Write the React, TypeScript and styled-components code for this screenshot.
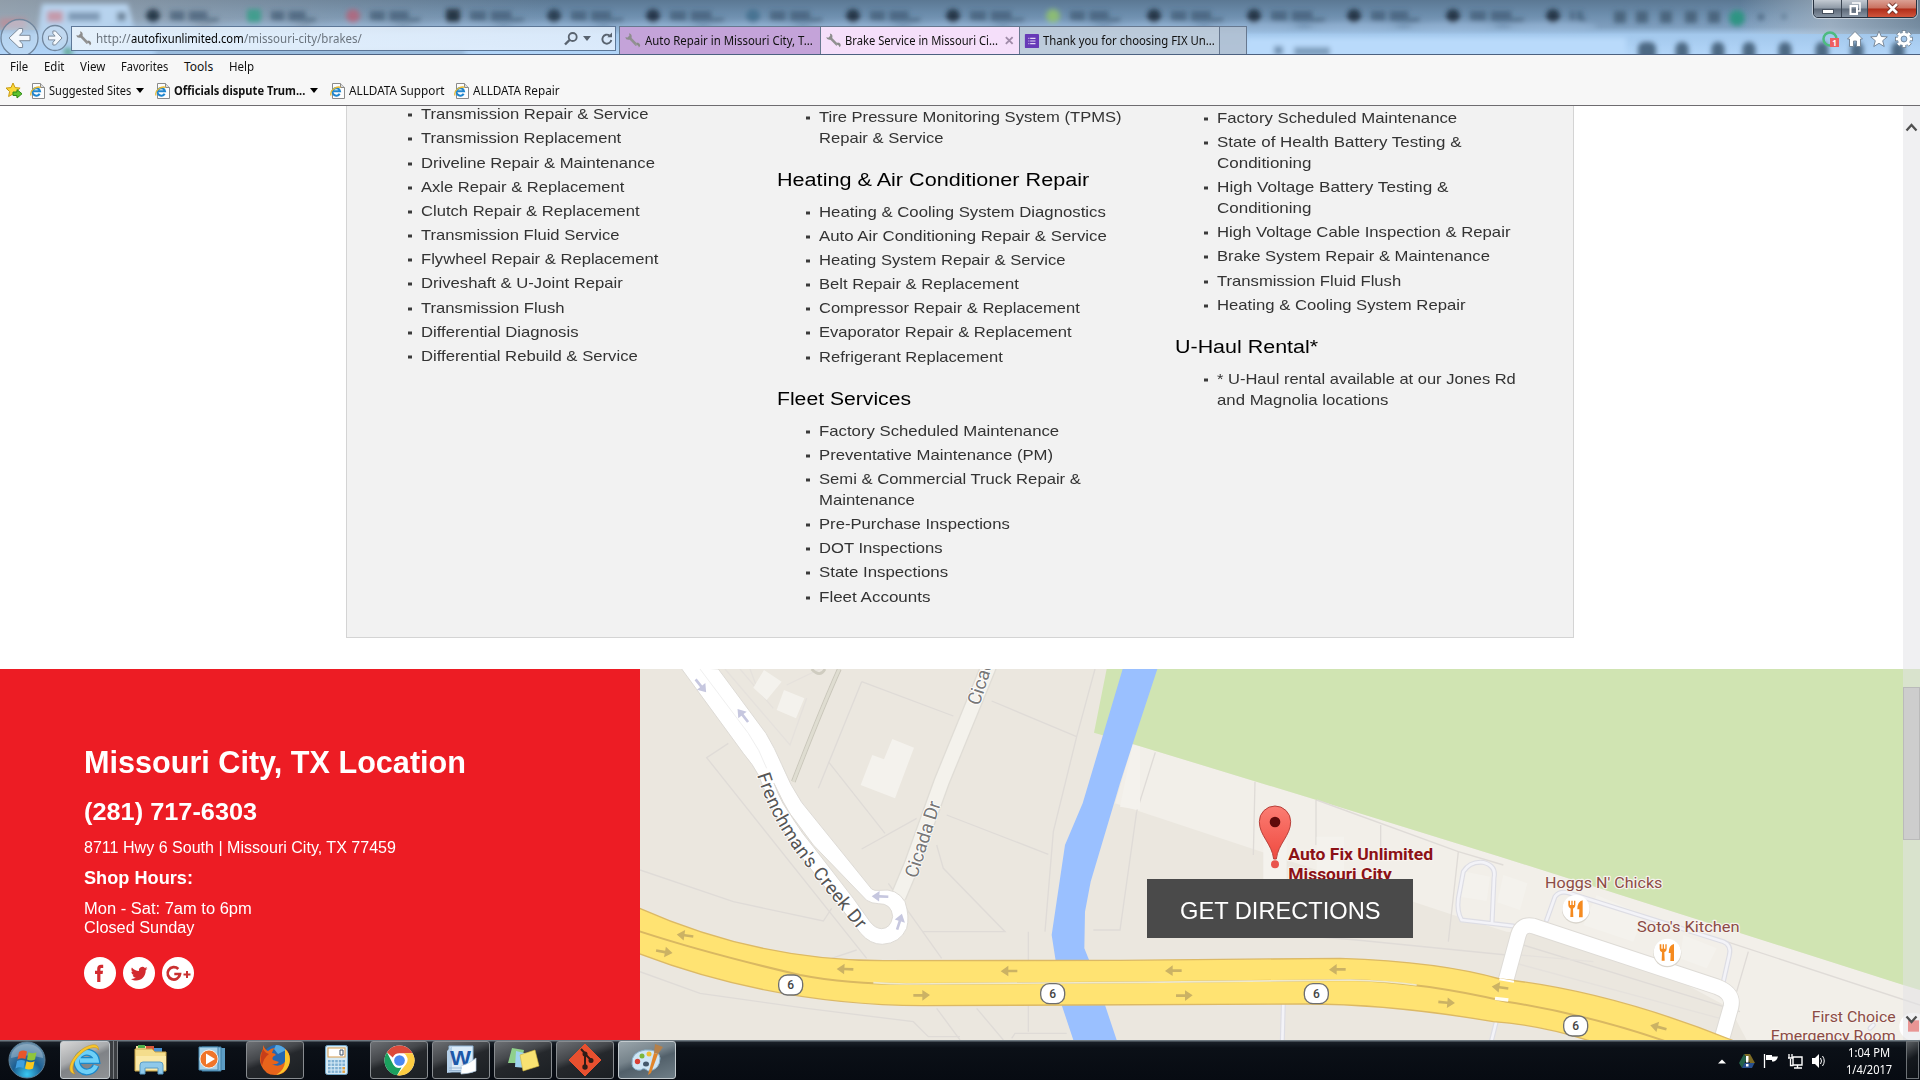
import React, { useLayoutEffect, useRef, useState } from "react";
import styled, { createGlobalStyle } from "styled-components";

const Global = createGlobalStyle`
  html, body { margin: 0; padding: 0; overflow: hidden; background: #fff; }
  * { box-sizing: border-box; }
  svg { display: block; }
`;
const uiFont = `"Noto Sans", "Open Sans", sans-serif`;
const siteFont = `"Liberation Sans", Arial, sans-serif`;

/* ---------- text with a fixed measure ---------- */
const Measure = styled.span<{ $w: number }>`
  display: inline-block;
  width: ${(p) => p.$w}px;
  white-space: nowrap;
  flex: none;
`;
const Inner = styled.span`
  display: inline-block;
  transform-origin: 0 50%;
`;
function Fit({ w, children }: { w: number; children: React.ReactNode }) {
  const ref = useRef<HTMLSpanElement>(null);
  const [k, setK] = useState(1);
  useLayoutEffect(() => {
    const el = ref.current;
    if (el && el.offsetWidth) setK(w / el.offsetWidth);
  }, [w]);
  return (
    <Measure $w={w}>
      <Inner ref={ref} style={{ transform: `scaleX(${k})` }}>{children}</Inner>
    </Measure>
  );
}

/* ---------- window ---------- */
const Screen = styled.div`
  width: 1920px;
  height: 1080px;
  display: flex;
  flex-direction: column;
  overflow: hidden;
  font-family: ${uiFont};
  font-size: 12px;
  color: #111;
`;
const Frame = styled.header`
  position: relative;
  flex: none;
  height: 55px;
  border-bottom: 1px solid #4c6180;
  display: flex;
  overflow: hidden;
`;
const Glass = styled.div`
  position: absolute;
  inset: 0;
`;
const NavRow = styled.div`
  position: relative;
  display: flex;
  align-items: flex-start;
  padding-top: 26px;
  width: 100%;
`;
const NavButtons = styled.div`
  width: 71px;
  margin-top: -26px;
  flex: none;
`;
const Address = styled.div`
  width: 545px;
  height: 25px;
  border: 1px solid #5d7797;
  background: linear-gradient(90deg, rgba(236, 245, 253, 0.85), rgba(226, 238, 252, 0.85));
  display: flex;
  align-items: center;
  padding: 0 1px 0 3px;
  color: #6b747e;
  flex: none;
  b { font-weight: 400; color: #000; }
`;
const UrlText = styled.div`
  display: flex;
  margin-left: 4px;
  flex: 1;
`;
const Tabs = styled.div`
  display: flex;
  margin-left: 3px;
  height: 28px;
`;
const Tab = styled.div<{ $bg: string; $w: number }>`
  width: ${(p) => p.$w}px;
  background: ${(p) => p.$bg};
  border: 1px solid #67788f;
  border-bottom: 0;
  border-right-width: 0;
  display: flex;
  align-items: center;
  padding: 0 4px 0 4px;
  gap: 4px;
  &:last-child { border-right-width: 1px; }
`;
const FrameIcons = styled.div`
  display: flex;
  align-items: center;
  height: 26px;
  gap: 5px;
  margin-left: auto;
  padding-right: 6px;
`;
const Caption = styled.div`
  position: absolute;
  top: -1px;
  right: 3px;
  display: flex;
  height: 19px;
  border: 1px solid #26313f;
  border-radius: 0 0 5px 5px;
  overflow: hidden;
  box-shadow: 0 0 0 1px rgba(255, 255, 255, 0.45);
`;
const CapBtn = styled.div<{ $w: number; $red?: boolean }>`
  width: ${(p) => p.$w}px;
  display: flex;
  align-items: center;
  justify-content: center;
  border-right: ${(p) => (p.$red ? 0 : "1px solid #3b4552")};
  background: ${(p) =>
    p.$red
      ? "linear-gradient(#dba094, #c9705f 48%, #b02c18 52%, #d0553c)"
      : "linear-gradient(#c3cad2, #8e99a6 48%, #5c6877 52%, #8794a3)"};
`;

const MenuBar = styled.nav`
  flex: none;
  height: 23px;
  background: #f7f7f7;
  display: flex;
  align-items: center;
  gap: 16px;
  padding-left: 10px;
`;
const FavBar = styled.nav`
  flex: none;
  height: 28px;
  background: #f7f7f7;
  border-bottom: 1px solid #6e6c70;
  display: flex;
  align-items: center;
  padding: 0 0 2px 5px;
`;
const Fav = styled.div<{ $gap: number; $bold?: boolean }>`
  display: flex;
  align-items: center;
  gap: 4px;
  margin-left: ${(p) => p.$gap}px;
  font-weight: ${(p) => (p.$bold ? 700 : 400)};
`;
const Caret = styled.i`
  border: 4px solid transparent;
  border-top: 5px solid #000;
  border-bottom: 0;
  margin-left: 1px;
`;

/* ---------- page ---------- */
const Page = styled.main`
  position: relative;
  flex: none;
  height: 934px;
  overflow: hidden;
  background: #fff;
  display: flex;
  flex-direction: column;
  font-family: ${siteFont};
`;
const Services = styled.section`
  margin-left: 346px;
  width: 1228px;
  height: 532px;
  margin-bottom: 31px;
  background: #f2f2f2;
  border: 1px solid #d4d4d4;
  border-top: 0;
  display: grid;
  grid-template-columns: 398.5px 398px 398px;
  padding-left: 31.5px;
  flex: none;
`;
const Column = styled.div<{ $top: number }>`
  margin-top: ${(p) => p.$top}px;
`;
const Title = styled.h3`
  margin: 20px 0 9px;
  font-size: 18px;
  line-height: 24px;
  font-weight: 400;
  color: #000;
`;
const List = styled.ul`
  margin: 0;
  padding: 0 0 0 42px;
  list-style: none;
`;
const Item = styled.li`
  display: flex;
  flex-direction: column;
  font-size: 15px;
  line-height: 21px;
  margin-bottom: 3.18px;
  color: #333;
  &::before {
    content: "";
    width: 4px;
    height: 3px;
    margin: 0 0 -3px -13px;
    background: #3a3a3a;
    transform: translateY(10.5px);
  }
`;
const Location = styled.section`
  display: flex;
  height: 371px;
  flex: none;
`;
const Info = styled.div`
  width: 640px;
  background: #ed1c24;
  color: #fff;
  padding: 76px 0 0 84px;
  display: flex;
  flex-direction: column;
`;
const Line = styled.div<{ $size: number; $lh: number; $mb?: number; $bold?: boolean }>`
  font-size: ${(p) => p.$size}px;
  line-height: ${(p) => p.$lh}px;
  margin-bottom: ${(p) => p.$mb ?? 0}px;
  font-weight: ${(p) => (p.$bold ? 700 : 400)};
`;
const Socials = styled.div`
  display: flex;
  gap: 7px;
`;
const MapBox = styled.div`
  position: relative;
  width: 1280px;
`;
const Directions = styled.button`
  position: absolute;
  left: 507px;
  top: 210px;
  width: 266px;
  height: 59px;
  padding: 4px 0 0;
  border: 0;
  background: #4a4a4a;
  color: #fff;
  font: 24px ${siteFont};
`;
const Scrollbar = styled.div`
  position: absolute;
  top: 0;
  right: 0;
  width: 17px;
  height: 100%;
  background: rgba(226, 226, 230, 0.52);
  display: flex;
  flex-direction: column;
  justify-content: space-between;
  padding: 17px 0 16px 2px;
`;
const Thumb = styled.div`
  position: absolute;
  left: 0;
  top: 581px;
  width: 17px;
  height: 153px;
  background: #cdcdcd;
  border: 1px solid #bababa;
`;

/* ---------- taskbar ---------- */
const Taskbar = styled.footer`
  flex: 1;
  background: linear-gradient(#6d7880 0, #6d7880 1px, #1a2028 2px, #0b1017 8px, #070b12);
  display: flex;
  padding-top: 1px;
  color: #fff;
`;
const Slot = styled.div<{ $w: number; $ml: number; $kind?: "open" | "active" | "lit" }>`
  width: ${(p) => p.$w}px;
  height: 38px;
  margin-left: ${(p) => p.$ml}px;
  display: flex;
  align-items: center;
  justify-content: center;
  flex: none;
  ${(p) =>
    p.$kind &&
    `border: 1px solid ${p.$kind === "open" ? "#888c90" : "#c3cace"};
     border-radius: 3px;
     background: ${
       p.$kind === "open"
         ? "linear-gradient(160deg,#6c6f73 0,#45484c 36%,#25282c 50%,#1b1f23)"
         : p.$kind === "active"
         ? "linear-gradient(155deg,#d6d6d6 0,#a9abad 40%,#808387 52%,#8f9295)"
         : "linear-gradient(160deg,#9aa5ab 0,#76838b 40%,#52606a 55%,#6f7e87)"
     };`}
`;
const Stack = styled.div`
  width: 4px;
  height: 38px;
  border-right: 1px solid #7d8185;
  background: #3b3e42;
`;
const Tray = styled.div`
  margin-left: auto;
  display: flex;
  align-items: center;
  height: 38px;
`;
const TrayIcons = styled.div`
  margin-right: 13px;
`;
const Clock = styled.div`
  display: flex;
  flex-direction: column;
  align-items: center;
  width: 48px;
  line-height: 17px;
  padding-top: 2px;
`;
const Peek = styled.div`
  width: 13px;
  height: 38px;
  margin-left: 13px;
  margin-right: 1px;
  border: 1px solid #6d7276;
  background: linear-gradient(150deg, #5b5f63, #15191e 45%, #0c1015);
`;

/* ---------- small drawings ---------- */
const Wrench = () => (
  <svg width="17" height="17" viewBox="0 0 17 17">
    <path d="M4.5 4.7 12.6 13" stroke="#909090" strokeWidth="2.6" />
    <path d="M5.1 1.2 A3.3 3.3 0 1 1 1.2 5.2 L3.8 5.6 5.4 3.9Z" fill="#8d8d8d" />
    <path d="M11 12.8a2.6 2.6 0 1 1 3.6 2.8l-.2-1.8-1.4-.8-1 .8Z" fill="#999" />
    <path d="M12.2 11.4a2.6 2.6 0 0 1 3.5 3.4l-1.6-1.4Z" fill="#888" />
  </svg>
);
const IePage = () => (
  <svg width="15" height="16" viewBox="0 0 15 16">
    <path d="M2.5.5h8l4 4v11h-12z" fill="#fdfdfd" stroke="#8a8a8a" />
    <path d="M10.5.5v4h4" fill="#ddd" stroke="#8a8a8a" />
    <path d="M9.600 10.700A3.800 3.800 0 1 1 10 8.300H3" fill="none" stroke="#2186cf" strokeWidth="2.100" />
    <path d="M1 12.500C-.5 7.500 6 3 10.600 4.300" fill="none" stroke="#e9b930" strokeWidth="1.300" />
  </svg>
);
const Star = () => (
  <svg width="18" height="18" viewBox="0 0 18 18">
    <path d="m8 1 2.1 4.6 5 .5-3.7 3.4 1 5L8 12l-4.4 2.5 1-5L1 6.100l5-.5z" fill="#fbd93b" stroke="#c89a10" />
    <path d="M8 10h4V7.600l5 4.200-5 4.200v-2.500H8z" fill="#5fc22e" stroke="#2f8a17" />
  </svg>
);
const icons = {
  search: (
    <svg width="16" height="16" viewBox="0 0 16 16" fill="none" stroke="#59636f">
      <circle cx="9.700" cy="6" r="4" strokeWidth="1.800" /><path d="M6.500 9 2 13.500" strokeWidth="2.400" />
    </svg>
  ),
  refresh: (
    <svg width="14" height="14" viewBox="0 0 14 14">
      <path d="M9.500 3.500A4.500 4.500 0 1 0 11.300 8" fill="none" stroke="#59636f" strokeWidth="1.900" />
      <path d="M7.300 5.200H12V.6z" fill="#59636f" />
    </svg>
  ),
};

function NavArrows() {
  return (
    <svg width="71" height="54" viewBox="0 0 71 54">
      <circle cx="19.500" cy="38" r="18.500" fill="rgba(205,224,243,.4)" stroke="#71869d" strokeWidth="1.300" />
      <path d="M9 38 19 28.500h3.600v3.400L19.500 35.300H30v5.400H19.500l3.100 3.400v3.400H19z" fill="#f4f8fc" stroke="#7d8b9b" />
      <circle cx="55" cy="38" r="12.500" fill="rgba(205,224,243,.4)" stroke="#71869d" strokeWidth="1.300" />
      <path d="M62 38 55.500 31h-2.600v2.600l2.200 2.500h-6.600v3.800h6.600l-2.200 2.500V45h2.600z" fill="#f4f8fc" stroke="#7d8b9b" />
    </svg>
  );
}

/* tabs of the window behind, seen through the glass */
const behind: [number, string, number][] = [
  [153, "#1f3040", 52], [254, "#3a9d8b", 48], [353, "#b0667d", 54], [453, "#1d2b3a", 58], [554, "#26384b", 56], [653, "#1f2f40", 58],
  [753, "#44708f", 56], [853, "#1c2c3d", 54], [953, "#1c2c3d", 58], [1053, "#8fc06f", 54], [1154, "#1c2c3d", 56], [1254, "#1c2c3d", 58],
  [1354, "#1c2c3d", 52], [1453, "#1c2c3d", 58], [1553, "#1c2c3d", 16],
];
function GlassArt() {
  return (
    <svg width="1920" height="54">
      <defs>
        <linearGradient id="aero" x2="0" y2="1">
          <stop offset="0" stopColor="#5b7893" /><stop offset=".25" stopColor="#6b8cab" /><stop offset=".5" stopColor="#7f9fbf" />
          <stop offset=".64" stopColor="#a3c8ec" /><stop offset="1" stopColor="#b2d5f8" />
        </linearGradient>
        <linearGradient id="edge"><stop offset="0" stopColor="#a7adb3" /><stop offset="1" stopColor="#a7adb3" stopOpacity="0" /></linearGradient>
        <linearGradient id="edgeR"><stop offset="0" stopColor="#c2ccd6" stopOpacity="0" /><stop offset=".5" stopColor="#b0bac4" /><stop offset="1" stopColor="#6f7f8c" /></linearGradient>
        <filter id="soft" x="-20%" y="-50%" width="140%" height="200%"><feGaussianBlur stdDeviation="2.800" /></filter>
      </defs>
      <rect width="1920" height="54" fill="url(#aero)" />
      <rect width="560" height="30" fill="url(#edge)" opacity=".7" />
      <rect x="1740" width="180" height="34" fill="url(#edgeR)" opacity=".6" />
      <g filter="url(#soft)">
        <path d="M36 44 42 4H128l10 40z" fill="#b7d3ee" />
        <rect x="0" y="18" width="26" height="10" fill="#c08a95" opacity=".7" />
        <rect x="47" y="11" width="16" height="11" fill="#c49aaa" />
        <rect x="68" y="12" width="32" height="9" fill="#7f9ab5" />
        <rect x="117" y="12" width="9" height="9" fill="#6e859b" />
        {behind.map(([x, c, w], i) => (
          <g key={x}>
            <ellipse cx={x} cy="27" rx="44" ry="5" fill="#a5c6e6" opacity=".45" />
            <rect x={x - 7} y="9" width="14" height="14" rx={i === 3 || i === 1 ? 2 : 7} fill={c} opacity=".9" />
            <path d={`M${x + 17} 16h${w * 0.28}M${x + 19 + w * 0.32} 16h${w * 0.36}`} stroke="#38526b" strokeWidth="10" opacity=".62" />
            <path d={`M${x + 18 + w * 0.7} 20h${w * 0.22}`} stroke="#38526b" strokeWidth="4" opacity=".6" />
          </g>
        ))}
        {[1614, 1636, 1660, 1685, 1708].map((x) => <rect key={x} x={x} y="11" width="12" height="12" fill="#3e566d" opacity=".75" />)}
        <circle cx="1737" cy="18" r="8" fill="#2f9483" />
        <rect x="1758" y="14" width="6" height="6" fill="#4f6a84" /><rect x="1782" y="14" width="4" height="5" fill="#5c7690" />
        <rect x="1246" y="38" width="380" height="20" fill="#b9dafb" />
        <rect x="1274" y="46" width="9" height="9" fill="#7293b3" /><rect x="1294" y="47" width="36" height="9" fill="#7e9ebd" />
        {[1647, 1682, 1718, 1749, 1785, 1822, 1857, 1898].map((x, i) => (
          <rect key={x} x={x - (i === 0 ? 9 : 6.500)} y="42" width={i === 0 ? 18 : 13} height="20" rx="6" fill="#3f5a74" opacity=".88" />
        ))}
        <circle cx="68" cy="52" r="5" fill="#4c9c7a" opacity=".7" />
        <rect x="155" y="50" width="310" height="5" fill="#6f8daa" opacity=".5" />
      </g>
    </svg>
  );
}

/* ---------- service lists ---------- */
type Entry = [string, number][];
type Block = { title?: [string, number]; items: Entry[] };
const columns: { top: number; blocks: Block[] }[] = [
  {
    top: -2.8,
    blocks: [{
      items: [
        [["Transmission Repair & Service", 227]], [["Transmission Replacement", 200]], [["Driveline Repair & Maintenance", 234]],
        [["Axle Repair & Replacement", 203]], [["Clutch Repair & Replacement", 219]], [["Transmission Fluid Service", 199]],
        [["Flywheel Repair & Replacement", 237]], [["Driveshaft & U-Joint Repair", 202]], [["Transmission Flush", 143]],
        [["Differential Diagnosis", 157]], [["Differential Rebuild & Service", 217]],
      ],
    }],
  },
  {
    top: -0.5,
    blocks: [
      { items: [[["Tire Pressure Monitoring System (TPMS)", 303], ["Repair & Service", 125]]] },
      {
        title: ["Heating & Air Conditioner Repair", 312],
        items: [
          [["Heating & Cooling System Diagnostics", 287]], [["Auto Air Conditioning Repair & Service", 288]],
          [["Heating System Repair & Service", 247]], [["Belt Repair & Replacement", 200]],
          [["Compressor Repair & Replacement", 261]], [["Evaporator Repair & Replacement", 252]], [["Refrigerant Replacement", 184]],
        ],
      },
      {
        title: ["Fleet Services", 134],
        items: [
          [["Factory Scheduled Maintenance", 240]], [["Preventative Maintenance (PM)", 234]],
          [["Semi & Commercial Truck Repair &", 262], ["Maintenance", 96]], [["Pre-Purchase Inspections", 191]],
          [["DOT Inspections", 123]], [["State Inspections", 129]], [["Fleet Accounts", 111]],
        ],
      },
    ],
  },
  {
    top: 0.8,
    blocks: [
      {
        items: [
          [["Factory Scheduled Maintenance", 240]], [["State of Health Battery Testing &", 245], ["Conditioning", 94]],
          [["High Voltage Battery Testing &", 231], ["Conditioning", 94]], [["High Voltage Cable Inspection & Repair", 294]],
          [["Brake System Repair & Maintenance", 273]], [["Transmission Fluid Flush", 184]], [["Heating & Cooling System Repair", 248]],
        ],
      },
      { title: ["U-Haul Rental*", 143], items: [[["* U-Haul rental available at our Jones Rd", 299], ["and Magnolia locations", 171]]] },
    ],
  },
];

/* ---------- map ---------- */
const Arrow = ({ x, y, a = 0, c = "#cbb264" }: { x: number; y: number; a?: number; c?: string }) => (
  <path transform={`translate(${x} ${y}) rotate(${a})`} d="M-25 0 -2-17v12H25v8H-2v12z" fill={c} />
);
const Shield = ({ x, y }: { x: number; y: number }) => (
  <g transform={`translate(${x} ${y})`}>
    <rect x="-36" y="-30" width="72" height="60" rx="26" fill="#fff" stroke="#6f6f6f" strokeWidth="4" />
    <text y="13" textAnchor="middle" fontSize="36" fontWeight="500" fill="#444">6</text>
  </g>
);
const Food = ({ x, y }: { x: number; y: number }) => (
  <g transform={`translate(${x} ${y})`}>
    <circle r="42" cy="3" fill="#d9d5cd" /><circle r="41" fill="#fff" />
    <path d="M-23-24v14q0 8 7 10l-1 25h9l-1-25q7-2 7-10v-14h-4v13h-4v-13h-4v13h-4v-13zM20-25Q4-22 4 2h6l-1 24h11z" fill="#f58a1f" />
  </g>
);
const Label = ({ x, y, w, size = 46, bold, children }: { x: number; y: number; w: number; size?: number; bold?: boolean; children: string }) => (
  <text x={x} y={y} textLength={w} lengthAdjust="spacingAndGlyphs" fontSize={size} fontWeight={bold ? 700 : 400}
    fill={bold ? "#8c1116" : "#8c4b45"} stroke="#f6f3ee" strokeWidth="7" paintOrder="stroke" strokeLinejoin="round">{children}</text>
);
const creekRoad =
  "M120 5 235 12 378 205Q405 250 425 298 450 360 485 412L695 672Q702 678 720 676 770 668 795 710 810 755 800 790 780 835 727 838 690 838 662 805L480 570Q430 500 400 440L355 330Q340 300 310 265z";
const creekIsland = "M402 355Q425 420 462 462 490 500 520 540L680 706Q695 716 715 716 755 715 758 755 752 790 725 791 705 790 690 770L640 700 520 545Q455 470 402 355z";
function MapArt() {
  return (
    <svg width="1280" height="371" viewBox="0 12 3840 1113" fontFamily="Roboto, sans-serif">
      <defs>
        <path id="creek" d="M351 330C385 440 440 530 506 612S600 730 660 802" />
        <path id="cic" d="M830 642 906 405" />
        <path id="cic2" d="M1018 124 1094-113" />
        <linearGradient id="pin" x2="0" y2="1"><stop offset="0" stopColor="#fb7d73" /><stop offset="1" stopColor="#ef4a40" /></linearGradient>
      </defs>
      <rect width="3840" height="1140" fill="#ebe7df" />
      <path d="M1478 237 2030 405 2580 575 3840 975V1125H3320L3270 1030 2900 830 2600 800 2440 750 1425 415z" fill="#f2efe9" />
      <path d="M1400 12H3840V975L3790 960 2580 575 2030 405 1478 237 1362 203z" fill="#d0e4b2" />
      <g fill="none" stroke="#dfdbd7" strokeWidth="4">
        <path d="M265 235 200 278 680 880M0 615 280 710 550 768 575 730M665 50 535 370M665 50 940 153M565 290 735 505M665 552 830 460M920 450 1225 568M890 540 910 610 1095 800H850M1055 108 1310 215M1310 215 1365 12M1310 215 1240 500 1215 800M1165 800V1100M1490 440 1440 795H1360M745 655 905 880M575 880 650 855" />
        <path d="M0 920 180 985 500 1030 820 1070 865 1115H960M890 1030 960 1125M1010 1030 1090 1125M1115 1120 1125 1105H1280M1546 262 1490 440M1845 350 1840 570M2028 405V540M2222 480V560M2455 560 2425 830M1840 800 2150 825 2600 870M2030 405 2455 560 2590 600M3325 860 3290 980M3260 830 3840 1020M2650 840 3300 1040" />
      </g>
      <g fill="none" stroke="#e5e1dc" strokeWidth="4">
        <path d="M255 12 450 240 500 100M300 12 400 130M350 65 330 12M440 60 540 12" />
        <path d="M2610 890 3240 1060M2640 870 2860 890" />
      </g>
      <path d="M515 12q25 28 40 0" fill="none" stroke="#cfccc0" strokeWidth="8" />
      <path d="M598 12Q545 130 460 350" fill="none" stroke="#c9c6ba" strokeWidth="14" />
      <path d="M598 12Q545 130 460 350" fill="none" stroke="#dfddd1" strokeWidth="9" />
      <g fill="#f4f2ed">
        <path d="M372 15 425 50 380 105 340 68zM432 75 493 100 468 160 410 135zM757 222 822 248 765 400 662 360 697 270 732 283z" />
        <path d="M1478 240 1440 425 1500 435V245zM1870 510H1940V650H1870zM2030 515H2112V650H2030zM2465 618 2550 635 2540 708 2460 695zM2590 630 2662 655 2640 735 2572 712zM2870 690 3010 750 2980 830 2830 780zM3130 810 3230 850 3200 910 3120 880z" />
      </g>
      <path d="M1448 12 1328 415 1275 540 1235 810 1247 887 1265 1020 1300 1125H1430L1395 1020 1348 887 1333 850 1335 740 1352 650 1440 355 1478 237 1552 12z" fill="#9ac0ff" />

      <g fill="none" strokeLinejoin="round">
        <path d="M775 695 815 600 905 350 1048 0" stroke="#e0ddd6" strokeWidth="50" />
        <path d="M775 695 815 600 905 350 1048 0" stroke="#f4f2ec" strokeWidth="42" />
      </g>
      <path d={creekRoad} fill="#fff" stroke="#dedbd6" strokeWidth="3" />
      <path d={creekIsland} fill="#ebe7df" stroke="#dedbd6" strokeWidth="3" />
      <path d="M180 12 325 205Q360 255 380 310" stroke="#ececec" strokeWidth="2.500" fill="none" />

      <g fill="none" strokeLinecap="round">
        {["M2620 783 2465 765Q2450 740 2455 700L2470 620Q2490 588 2530 592 2570 602 2562 640L2556 775",
          "M2720 765 2745 695Q2760 675 2790 685L3250 830Q3275 840 3268 870L3250 950",
          "M1930 1015 1927 1125", "M2570 1065 2555 1125", "M3690 1090 3700 1080"].map((d) => (
          <g key={d}><path d={d} stroke="#dddde4" strokeWidth="15" /><path d={d} stroke="#f3f3f8" strokeWidth="8" /></g>
        ))}
        <path d="M2597 950 2635 810Q2645 775 2680 783L3230 965Q3282 985 3273 1025L3243 1130" stroke="#dedbd6" strokeWidth="50" />
        <path d="M2597 950 2635 810Q2645 775 2680 783L3230 965Q3282 985 3273 1025L3243 1130" stroke="#fff" strokeWidth="44" />
      </g>

      <path d="M-5 728Q350 887 730 887L1440 886 2100 880Q2400 890 2580 942 2900 975 3275 1125L3200 1140H2900L2840 1125Q2700 1080 2560 1070 2250 1017 2000 1017L1300 1020 850 1022Q400 1020 -5 865z" fill="#ffe372" stroke="#dcb965" strokeWidth="4" />
      <path d="M-5 798Q200 865 480 930 620 957 800 957L1500 952 2130 945Q2350 952 2600 1010 2850 1050 3080 1130" fill="none" stroke="#d9b862" strokeWidth="6" />
      <path d="M700 953Q750 957 800 957L1500 952 2130 945Q2250 948 2330 960" fill="none" stroke="#efe9cc" strokeWidth="5" />
      <path d="M2565 1000 2605 1005" stroke="#fffdf2" strokeWidth="10" />
      <path d="M2578 943 2622 950" stroke="#fff" strokeWidth="6" />

      <Arrow x={135} y={812} a={8} /><Arrow x={73} y={860} a={190} /><Arrow x={615} y={913} a={3} /><Arrow x={845} y={990} a={180} />
      <Arrow x={1107} y={919} /><Arrow x={1600} y={918} /><Arrow x={1633} y={991} a={180} /><Arrow x={2092} y={914} />
      <Arrow x={2420} y={1012} a={185} /><Arrow x={2580} y={968} a={8} /><Arrow x={3055} y={1087} a={15} />
      <Arrow x={183} y={62} a={232} c="#c6c7df" /><Arrow x={308} y={152} a={52} c="#c6c7df" />
      <Arrow x={720} y={695} a={3} c="#c6c7df" /><Arrow x={778} y={770} a={108} c="#c6c7df" />
      <Shield x={452} y={960} /><Shield x={1238} y={986} /><Shield x={2029} y={986} /><Shield x={2807} y={1083} />

      <g fill="#666" stroke="#fff" strokeWidth="5" paintOrder="stroke">
        <text fontSize="56" fill="#555"><textPath href="#creek" textLength="560">Frenchman's Creek Dr</textPath></text>
        <text fontSize="56" fill="#777"><textPath href="#cic" textLength="238">Cicada Dr</textPath></text>
        <text fontSize="56" fill="#777"><textPath href="#cic2" textLength="238">Cicada Dr</textPath></text>
      </g>

      <Label x={2715} y={670} w={352}>Hoggs N' Chicks</Label>
      <Label x={2991} y={801} w={308}>Soto's Kitchen</Label>
      <Label x={3515} y={1070} w={252}>First Choice</Label>
      <Label x={3392} y={1129} w={375}>Emergency Room</Label>
      <Food x={2808} y={731} /><Food x={3082} y={862} />
      <circle cx="3820" cy="1085" r="42" fill="#fff" /><rect x="3804" y="1066" width="33" height="34" fill="#f0413c" />

      <path d="M1905 423a47 47 0 0 1 47 47c0 42-38 66-43 112h-8c-5-46-43-70-43-112a47 47 0 0 1 47-47z" fill="url(#pin)" stroke="#b8403a" strokeWidth="3" />
      <circle cx="1905" cy="471" r="16" fill="#5f0b0b" /><circle cx="1905" cy="598" r="12" fill="#e9544c" />
      <Label x={1945} y={584} w={434} size={50} bold>Auto Fix Unlimited</Label>
      <Label x={1945} y={646} w={310} size={50} bold>Missouri City</Label>
    </svg>
  );
}

/* ---------- social badges ---------- */
const badgePaths = {
  facebook: <path d="M13.200 25v-8H11v-3.200h2.200v-2c0-2.800 1.500-4 3.900-4h2.100v3.100h-1.500c-1 0-1.300.5-1.300 1.300v1.600H19l-.4 3.200h-2.200v8z" fill="#d32a2f" />,
  twitter: <path d="M24.500 11.300l-1.900.6c.7-.5 1.200-1.100 1.400-1.800l-2.100.8a3.500 3.500 0 0 0-6 3.100c-2.800-.1-5.200-1.400-7-3.500-1 1.700-.5 3.600 1 4.600l-1.500-.4c0 1.700 1.200 3.100 2.800 3.400l-1.500.1c.4 1.400 1.700 2.300 3.200 2.400a7 7 0 0 1-5 1.400c6.900 4.200 14.900-.4 14.800-8.700.7-.5 1.400-1.200 1.800-2z" fill="#d32a2f" />,
  google: (
    <g fill="none" stroke="#c9302f">
      <path d="M16.300 12a6.200 6.200 0 1 0 1.700 5h-5.700" strokeWidth="2.700" /><path d="M25 14v7M21.500 17.500h7" strokeWidth="2" />
    </g>
  ),
};
const Badge = ({ name }: { name: keyof typeof badgePaths }) => (
  <svg width="32" height="32" viewBox="0 0 32 32"><circle cx="16" cy="16" r="16" fill="#fff" />{badgePaths[name]}</svg>
);

/* ---------- taskbar icons ---------- */
const Orb = () => (
  <svg width="38" height="38" viewBox="0 0 38 38">
    <defs><radialGradient id="orb" cx=".5" cy=".9" r=".9"><stop offset="0" stopColor="#39c8f2" /><stop offset=".45" stopColor="#1c5f93" /><stop offset="1" stopColor="#6f93ad" /></radialGradient></defs>
    <circle cx="19" cy="19" r="18" fill="url(#orb)" stroke="#5d7f97" />
    <path d="M3 17a16 14 0 0 1 32 0q-16-5-32 0z" fill="#fff" opacity=".25" />
    <path d="M11 11q4-2.500 8-.5l-1.600 7.500q-4-1.800-8 .5z" fill="#e8562a" /><path d="M20.500 11.200q4 2 8 0L27 18.500q-4 2-8 0z" fill="#8fc63d" />
    <path d="M9 20q4-2 8-.3L15.500 27q-4-1.800-8 .4z" fill="#3f9fe0" /><path d="M18.600 20.200q4 2 8 0L25 27.500q-4 2-8 0z" fill="#fbc81d" />
  </svg>
);
const IeIcon = () => (
  <svg width="34" height="34" viewBox="0 0 34 34">
    <path d="M28 22.500A9.800 9.800 0 1 1 28.500 17.500H12" fill="none" stroke="#1c87c9" strokeWidth="7" />
    <path d="M28 22.500A9.800 9.800 0 1 1 28.500 17.500H12" fill="none" stroke="#6ed0f8" strokeWidth="4.500" />
    <path d="M7 31C-4 30 4 12 16 5 24 .5 31 0 30.500 7 29 3 22 4 15 9 6 16 2 25 7 31z" fill="#f7c52c" stroke="#c98f10" strokeWidth=".5" />
  </svg>
);
const Folder = () => (
  <svg width="34" height="32" viewBox="0 0 34 32">
    <path d="M2 2h10v4H2z" fill="#f5e4a0" /><path d="M4 1h7v3H4z" fill="#4fae4a" /><path d="M12 2h8v4h-8z" fill="#d8553c" /><path d="M20 4h8v5h-8z" fill="#4a8fd0" />
    <path d="M1 5h17l3 3h11v19H1z" fill="#f4dd8c" stroke="#caa74d" /><path d="M2 12h30v14H2z" fill="#fae9a9" />
    <path d="M6 30V21q0-3 3-3h17q3 0 3 3v9h-5v-6H11v6z" fill="#8fc9ea" stroke="#5a9cc6" />
  </svg>
);
const Player = () => (
  <svg width="28" height="28" viewBox="0 0 28 28">
    <path d="M8 2h19v22H8z" fill="#5c9cc4" /><path d="M4 1h19v24H4z" fill="#84bbdc" stroke="#3d7ca4" /><path d="M1 1h19v23H1z" fill="#a9d2e9" stroke="#4787af" />
    <circle cx="11" cy="13" r="9" fill="#f0752a" stroke="#fff" strokeWidth=".8" /><path d="M8 7.500 17 13l-9 5.500z" fill="#fff" />
  </svg>
);
const Fox = () => (
  <svg width="32" height="32" viewBox="0 0 32 32">
    <circle cx="17" cy="14" r="13" fill="#2467b2" /><path d="M17 1a13 13 0 0 1 10 5l-8 4-4-5z" fill="#54a7e2" />
    <path d="M4 5q-5 8-2 16 4 10 14 10 13 0 15-15 0-8-5-11 4 9-1 14-6 5-12 1 5 1 7-2-3-1-6-2-2-3 3-5-1-2-4-2 0-3 3-5-4 0-7 3-3-1-5-6z" fill="#e8641b" />
    <path d="M26 5q7 6 4 16-4 9-13 10 9-5 9-14z" fill="#fbc52c" /><path d="M4 5Q0 14 3 22q2-9 7-12-4-1-6-5z" fill="#c73e18" />
  </svg>
);
const Calc = () => (
  <svg width="24" height="31" viewBox="0 0 24 31">
    <rect x=".5" y=".5" width="22" height="29" rx="2" fill="#d5eaf6" stroke="#6fa3c4" /><rect x="3" y="3" width="17" height="9" fill="#fff" stroke="#d99b4a" />
    <path d="M15 5h3v5h-3z" fill="none" stroke="#456" />
    {[0, 1, 2, 3].map((r) => [0, 1, 2, 3, 4].map((c) => <rect key={`${r}${c}`} x={3 + c * 3.600} y={15 + r * 3.500} width="2.600" height="2.400" fill={c === 4 && r > 1 ? "#e0a040" : "#7fb0d2"} />))}
  </svg>
);
const Chrome = () => (
  <svg width="31" height="31" viewBox="0 0 32 32">
    <circle cx="16" cy="16" r="15.500" fill="#fff" />
    <path d="M16 .5a15.500 15.500 0 0 1 13.500 8H16a7.500 7.500 0 0 0-7 4.500L3 7.500A15.500 15.500 0 0 1 16 .5z" fill="#dc4a3b" />
    <path d="M3 7.500 9.500 20A7.500 7.500 0 0 0 18 23.300L13.500 31.300A15.500 15.500 0 0 1 3 7.500z" fill="#1ba05e" />
    <path d="M29.500 8.500a15.500 15.500 0 0 1-16 22.800L22.500 20a7.500 7.500 0 0 0-2-11.500z" fill="#fdcd42" />
    <circle cx="16" cy="16" r="7" fill="#fff" /><circle cx="16" cy="16" r="5.500" fill="#4a88f0" />
  </svg>
);
const Word = () => (
  <svg width="31" height="32" viewBox="0 0 31 32">
    <path d="M3 2h24v26H3z" fill="#dcebf8" stroke="#8fb4d6" /><path d="M1 7 6 2v26l-5 1z" fill="#b5d0ea" />
    <text x="4" y="21" fontFamily="Liberation Sans" fontWeight="700" fontSize="21" fill="#1c58a8" textLength="21" lengthAdjust="spacingAndGlyphs">W</text>
    <path d="M15 22q8-2 15-8v13q-8 3-15 3z" fill="#fff" stroke="#b4cbe0" strokeWidth=".7" /><path d="M3 24h13M3 26.500h12" stroke="#9ab8d6" />
  </svg>
);
const Notes = () => (
  <svg width="34" height="28" viewBox="0 0 34 28">
    <path d="M6 2 18 4 15 17 2 17z" fill="#8fd08b" /><path d="M10 5 22 8 20 22 9 21z" fill="#9fd3ef" /><path d="M14 9 29 4 33 20 17 25z" fill="#f8e272" stroke="#d2b740" strokeWidth=".6" />
  </svg>
);
const Git = () => (
  <svg width="34" height="34" viewBox="0 0 34 34">
    <path d="M17 1 33 17 17 33 1 17z" fill="#e8502f" stroke="#e8502f" strokeLinejoin="round" />
    <path d="M13 6 17 10.500V24M17 11l6 6" fill="none" stroke="#2f1c17" strokeWidth="2" /><circle cx="17" cy="11" r="2.500" fill="#2f1c17" /><circle cx="17" cy="24" r="2.700" fill="#2f1c17" /><circle cx="23" cy="17.500" r="2.500" fill="#2f1c17" />
  </svg>
);
const Paint = () => (
  <svg width="34" height="34" viewBox="0 0 34 34">
    <path d="M2 21Q1 9 15 7 29 6 30 15 30 27 18 28 14 24 11 27 3 28 2 21z" fill="#cfe6f6" stroke="#8cb3cd" />
    <circle cx="7.500" cy="18.500" r="2.700" fill="#d93f35" /><circle cx="12" cy="13" r="2.500" fill="#7cb63c" /><circle cx="19" cy="11" r="2.500" fill="#efbd35" /><ellipse cx="16" cy="21" rx="3" ry="2.500" fill="#44596c" />
    <path d="M24 10 28 11 21 30l-3 2 1-4z" fill="#e0852b" /><path d="M25 1 33 4 28 11 24 10z" fill="#b5804a" />
  </svg>
);
const tasks: { w: number; ml: number; kind?: "open" | "lit"; icon: React.ReactNode }[] = [
  { w: 34, ml: 16, icon: <Folder /> }, { w: 28, ml: 30, icon: <Player /> },
  { w: 58, ml: 20, kind: "open", icon: <Fox /> }, { w: 24, ml: 21, icon: <Calc /> },
  { w: 58, ml: 21, kind: "open", icon: <Chrome /> }, { w: 58, ml: 4, kind: "open", icon: <Word /> },
  { w: 58, ml: 4, kind: "open", icon: <Notes /> }, { w: 58, ml: 4, kind: "open", icon: <Git /> }, { w: 58, ml: 4, kind: "lit", icon: <Paint /> },
];

const gear = Array.from({ length: 8 }, (_, i) => i * 45);

export default function App() {
  return (
    <Screen>
      <Global />
      <Frame>
        <Glass><GlassArt /></Glass>
        <NavRow>
          <NavButtons><NavArrows /></NavButtons>
          <Address>
            <Wrench />
            <UrlText><Fit w={35}>http://</Fit><b><Fit w={113}>autofixunlimited.com</Fit></b><Fit w={118}>/missouri-city/brakes/</Fit></UrlText>
            {icons.search}
            <Caret style={{ margin: "0 9px 0 4px", borderTopColor: "#59636f" }} />
            {icons.refresh}
          </Address>
          <Tabs>
            <Tab $w={201} $bg="#c4a3d9"><Wrench /><Fit w={168}>Auto Repair in Missouri City, T...</Fit></Tab>
            <Tab $w={199} $bg="#f5dffa">
              <Wrench /><Fit w={153}>Brake Service in Missouri Ci...</Fit>
              <svg width="13" height="9" viewBox="-3 0 13 9"><path d="m1 1 7 7M8 1 1 8" stroke="#a08ba8" strokeWidth="1.900" /></svg>
            </Tab>
            <Tab $w={200} $bg="rgba(190,203,217,.92)">
              <svg width="17" height="16" viewBox="-1 0 17 16"><rect width="16" height="16" rx="1" fill="#673ab7" /><path d="M6 5h6M6 8h6M6 11h6M4 5h1M4 8h1M4 11h1" stroke="#e3d8f5" strokeWidth="1.200" /></svg>
              <Fit w={172}>Thank you for choosing FIX Un...</Fit>
            </Tab>
            <Tab $w={28} $bg="rgba(178,192,208,.85)" />
          </Tabs>
          <FrameIcons>
            <svg width="20" height="20" viewBox="0 0 20 20"><circle cx="9" cy="10" r="6.500" fill="none" stroke="#4dbb80" strokeWidth="2.500" /><rect x="9" y="9" width="9" height="9" fill="#ee5f62" /><text x="13.500" y="16.500" fontSize="8" fontWeight="700" textAnchor="middle" fill="#fff">1</text></svg>
            <svg width="18" height="18" viewBox="0 0 18 18"><path d="M9 1.500 16.500 9H14.500v7.500h-4V11h-3v5.500h-4V9h-2z" fill="#fff" stroke="#6f7f90" strokeWidth=".9" /></svg>
            <svg width="20" height="20" viewBox="0 0 20 20"><path d="m10 2 2.300 5.500 6 .4-4.600 3.800 1.500 5.800-5.200-3.200-5.200 3.200 1.500-5.800L1.700 7.900l6-.4z" fill="#fff" stroke="#6f7f90" strokeWidth=".9" /></svg>
            <svg width="20" height="20" viewBox="-10 -10 20 20">
              {gear.map((a) => <rect key={a} x="-1.800" y="-8.500" width="3.600" height="4" transform={`rotate(${a})`} fill="#fff" stroke="#6f7f90" strokeWidth=".8" />)}
              <circle r="4.700" fill="none" stroke="#fff" strokeWidth="3" /><circle r="2.900" fill="none" stroke="#6f7f90" strokeWidth=".8" />
            </svg>
          </FrameIcons>
        </NavRow>
        <Caption>
          <CapBtn $w={28}><svg width="14" height="14"><rect x="1.500" y="7.500" width="11" height="4" fill="#fff" stroke="#454f5c" /></svg></CapBtn>
          <CapBtn $w={26}><svg width="14" height="14" viewBox="0 0 14 14" fill="none"><path d="M4 1h8v8h-2" stroke="#fff" strokeWidth="1.500" /><rect x="2.500" y="4" width="6.500" height="8" stroke="#fff" strokeWidth="2" /></svg></CapBtn>
          <CapBtn $w={48} $red><svg width="13" height="13" viewBox="0 0 13 13"><path d="m2 2 9 9M11 2l-9 9" stroke="#6b2a20" strokeWidth="4.500" /><path d="m2 2 9 9M11 2l-9 9" stroke="#fff" strokeWidth="2.800" /></svg></CapBtn>
        </Caption>
      </Frame>
      <MenuBar>
        <Fit w={18}>File</Fit><Fit w={20}>Edit</Fit><Fit w={25}>View</Fit><Fit w={47}>Favorites</Fit><Fit w={29}>Tools</Fit><Fit w={25}>Help</Fit>
      </MenuBar>
      <FavBar>
        <Star />
        <Fav $gap={7}><IePage /><Fit w={82}>Suggested Sites</Fit><Caret /></Fav>
        <Fav $gap={11} $bold><IePage /><Fit w={131}>Officials dispute Trum...</Fit><Caret /></Fav>
        <Fav $gap={12}><IePage /><Fit w={96}>ALLDATA Support</Fit></Fav>
        <Fav $gap={9}><IePage /><Fit w={87}>ALLDATA Repair</Fit></Fav>
      </FavBar>

      <Page>
        <Services>
          {columns.map((col, i) => (
            <Column key={i} $top={col.top}>
              {col.blocks.map((b, j) => (
                <React.Fragment key={j}>
                  {b.title && <Title><Fit w={b.title[1]}>{b.title[0]}</Fit></Title>}
                  <List>
                    {b.items.map((lines, k) => (
                      <Item key={k}>{lines.map(([t, w]) => <Fit key={t} w={w}>{t}</Fit>)}</Item>
                    ))}
                  </List>
                </React.Fragment>
              ))}
            </Column>
          ))}
        </Services>
        <Location>
          <Info>
            <Line $size={31} $lh={36} $mb={16} $bold><Fit w={382}>Missouri City, TX Location</Fit></Line>
            <Line $size={24} $lh={30} $mb={11} $bold><Fit w={173}>(281) 717-6303</Fit></Line>
            <Line $size={16} $lh={20} $mb={10}><Fit w={312}>8711 Hwy 6 South | Missouri City, TX 77459</Fit></Line>
            <Line $size={18} $lh={20} $mb={11} $bold><Fit w={109}>Shop Hours:</Fit></Line>
            <Line $size={16} $lh={19}><Fit w={168}>Mon - Sat: 7am to 6pm</Fit></Line>
            <Line $size={16} $lh={19} $mb={20}><Fit w={111}>Closed Sunday</Fit></Line>
            <Socials><Badge name="facebook" /><Badge name="twitter" /><Badge name="google" /></Socials>
          </Info>
          <MapBox>
            <MapArt />
            <Directions><Fit w={201}>GET DIRECTIONS</Fit></Directions>
          </MapBox>
        </Location>
        <Scrollbar>
          <svg width="14" height="9" viewBox="0 0 14 9"><path d="m1.500 7.500 5-5.500 5 5.500" fill="none" stroke="#505050" strokeWidth="2.300" /></svg>
          <Thumb />
          <svg width="14" height="9" viewBox="0 0 14 9"><path d="m1.500 1.500 5 5.500 5-5.500" fill="none" stroke="#505050" strokeWidth="2.300" /></svg>
        </Scrollbar>
      </Page>

      <Taskbar>
        <Slot $w={38} $ml={8}><Orb /></Slot>
        <Slot $w={50} $ml={14} $kind="active"><IeIcon /></Slot>
        <Stack /><Stack />
        {tasks.map((t, i) => <Slot key={i} $w={t.w} $ml={t.ml} $kind={t.kind}>{t.icon}</Slot>)}
        <Tray>
          <TrayIcons>
            <svg width="126" height="38" viewBox="1706 1041 126 38">
              <path d="M1718 1063.500h8l-4-4z" fill="#fff" />
              <path d="M1744 1054h6l5 9h-5z" fill="#7d6b24" /><path d="M1744 1054l3 5-5 9-3-5z" fill="#236048" /><path d="M1742 1068l2.500-5h10l-2.500 5z" fill="#28508f" />
              <path d="M1746 1056h2.500v6.500h-2.500zM1746 1064h2.500v2.500h-2.500z" fill="#fff" />
              <path d="M1764.500 1054v14" stroke="#fff" strokeWidth="1.300" /><path d="M1766 1055h6v1.500h6q-1 4-4 5h-2v-1.500h-6z" fill="#fff" />
              <path d="M1793 1057h9v8h-9zM1794 1068h8M1797.500 1065v3" fill="none" stroke="#fff" strokeWidth="1.400" /><path d="M1789 1054v4M1792 1054v4M1788 1058h5M1790.500 1059v6.500h3" fill="none" stroke="#fff" strokeWidth="1.300" />
              <path d="M1812 1058h3l4-4v14l-4-4h-3z" fill="#fff" /><path d="M1820.500 1058q2 3 0 6M1822.500 1056q3.500 5 0 10" fill="none" stroke="#fff" />
            </svg>
          </TrayIcons>
          <Clock><Fit w={42}>1:04 PM</Fit><Fit w={46}>1/4/2017</Fit></Clock>
          <Peek />
        </Tray>
      </Taskbar>
    </Screen>
  );
}
